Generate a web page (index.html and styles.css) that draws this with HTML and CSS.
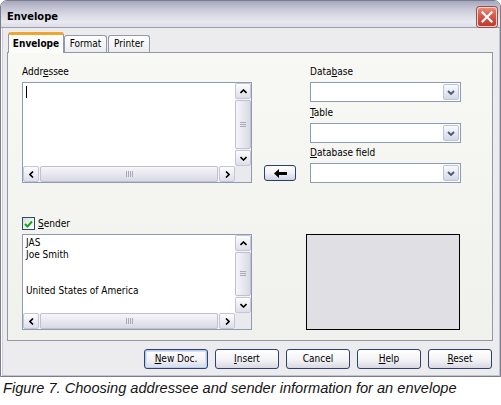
FILE: index.html
```html
<!DOCTYPE html>
<html>
<head>
<meta charset="utf-8">
<title>Envelope</title>
<link rel="stylesheet" href="styles.css">
</head>
<body>
<div class="window">
  <div class="titlebar">
    <span class="title">Envelope</span>
    <span class="close"><svg width="12" height="12" viewBox="0 0 12 12"><path d="M1.5 1.5 L10.5 10.5 M10.5 1.5 L1.5 10.5" stroke="#fff" stroke-width="2.2" stroke-linecap="square"/></svg></span>
  </div>
  <div class="body">
    <div class="tabs">
      <div class="tab active">Envelope</div>
      <div class="tab t-format">Format</div>
      <div class="tab t-printer">Printer</div>
    </div>
    <div class="panel">
      <div class="row-top">
        <div class="col-left">
          <div class="label">Addr<u>e</u>ssee</div>
          <div class="textbox tb-addr">
            <div class="tb-content"><span class="caret"></span></div>
            <div class="vscroll">
              <div class="sb-btn"><svg width="7" height="5" viewBox="0 0 7 5"><path d="M0.5 4 L3.5 1 L6.5 4" fill="none" stroke="#000" stroke-width="1.6"/></svg></div>
              <div class="vthumb"><svg width="6" height="6" viewBox="0 0 6 6"><path d="M0 0.5H6M0 2.5H6M0 4.5H6" stroke="#a9a9bb" stroke-width="1"/></svg></div>
              <div class="sb-btn"><svg width="7" height="5" viewBox="0 0 7 5"><path d="M0.5 1 L3.5 4 L6.5 1" fill="none" stroke="#000" stroke-width="1.6"/></svg></div>
            </div>
            <div class="hscroll">
              <div class="sb-btn"><svg width="5" height="7" viewBox="0 0 5 7"><path d="M4 0.5 L1 3.5 L4 6.5" fill="none" stroke="#000" stroke-width="1.6"/></svg></div>
              <div class="hthumb"><svg width="7" height="6" viewBox="0 0 7 6"><path d="M0.5 0V6M2.5 0V6M4.5 0V6M6.5 0V6" stroke="#a9a9bb" stroke-width="1"/></svg></div>
              <div class="sb-btn"><svg width="5" height="7" viewBox="0 0 5 7"><path d="M1 0.5 L4 3.5 L1 6.5" fill="none" stroke="#000" stroke-width="1.6"/></svg></div>
            </div>
            <div class="corner"></div>
          </div>
        </div>
        <div class="col-mid">
          <div class="arrow-btn"><svg width="13" height="9" viewBox="0 0 13 9"><path d="M0 4.5 L5 0 V3 H13 V6 H5 V9 Z" fill="#000"/></svg></div>
        </div>
        <div class="col-right">
          <div class="label">Data<u>b</u>ase</div>
          <div class="combo"><span class="dd"><svg width="8" height="5" viewBox="0 0 8 5"><path d="M1 1 L4 4 L7 1" fill="none" stroke="#4a5878" stroke-width="1.8"/></svg></span></div>
          <div class="label l2"><u>T</u>able</div>
          <div class="combo"><span class="dd"><svg width="8" height="5" viewBox="0 0 8 5"><path d="M1 1 L4 4 L7 1" fill="none" stroke="#4a5878" stroke-width="1.8"/></svg></span></div>
          <div class="label l3"><u>D</u>atabase field</div>
          <div class="combo"><span class="dd"><svg width="8" height="5" viewBox="0 0 8 5"><path d="M1 1 L4 4 L7 1" fill="none" stroke="#4a5878" stroke-width="1.8"/></svg></span></div>
        </div>
      </div>
      <div class="row-bottom">
        <div class="col-left">
          <div class="check-line">
            <span class="checkbox"><svg width="9" height="8" viewBox="0 0 9 8"><path d="M1 4 L3.5 6.5 L8 1.5" fill="none" stroke="#21a121" stroke-width="2"/></svg></span>
            <span class="check-label"><u>S</u>ender</span>
          </div>
          <div class="textbox tb-sender">
            <div class="tb-content text">JAS<br>Joe Smith<br><br><br>United States of America</div>
            <div class="vscroll">
              <div class="sb-btn"><svg width="7" height="5" viewBox="0 0 7 5"><path d="M0.5 4 L3.5 1 L6.5 4" fill="none" stroke="#000" stroke-width="1.6"/></svg></div>
              <div class="vthumb"><svg width="6" height="6" viewBox="0 0 6 6"><path d="M0 0.5H6M0 2.5H6M0 4.5H6" stroke="#a9a9bb" stroke-width="1"/></svg></div>
              <div class="sb-btn"><svg width="7" height="5" viewBox="0 0 7 5"><path d="M0.5 1 L3.5 4 L6.5 1" fill="none" stroke="#000" stroke-width="1.6"/></svg></div>
            </div>
            <div class="hscroll">
              <div class="sb-btn"><svg width="5" height="7" viewBox="0 0 5 7"><path d="M4 0.5 L1 3.5 L4 6.5" fill="none" stroke="#000" stroke-width="1.6"/></svg></div>
              <div class="hthumb"><svg width="7" height="6" viewBox="0 0 7 6"><path d="M0.5 0V6M2.5 0V6M4.5 0V6M6.5 0V6" stroke="#a9a9bb" stroke-width="1"/></svg></div>
              <div class="sb-btn"><svg width="5" height="7" viewBox="0 0 5 7"><path d="M1 0.5 L4 3.5 L1 6.5" fill="none" stroke="#000" stroke-width="1.6"/></svg></div>
            </div>
            <div class="corner"></div>
          </div>
        </div>
        <div class="preview"></div>
      </div>
    </div>
    <div class="buttons">
      <button type="button" class="btn default"><u>N</u>ew Doc.</button>
      <button type="button" class="btn"><u>I</u>nsert</button>
      <button type="button" class="btn">Cancel</button>
      <button type="button" class="btn"><u>H</u>elp</button>
      <button type="button" class="btn"><u>R</u>eset</button>
    </div>
  </div>
</div>
<p class="caption">Figure 7. Choosing addressee and sender information for an envelope</p>
</body>
</html>
```

FILE: styles.css
```css
html, body {
  margin: 0;
  padding: 0;
  background: #ffffff;
}
body {
  width: 501px;
  height: 405px;
  overflow: hidden;
  font-family: "DejaVu Sans Condensed", "Liberation Sans", sans-serif;
  font-stretch: condensed;
  font-size: 10px;
  color: #000;
}
u {
  text-decoration: underline;
  text-underline-offset: 1px;
}

.window {
  width: 501px;
  height: 377px;
  box-sizing: border-box;
  border: 1px solid #7c7c90;
  border-radius: 7px 7px 0 0;
  overflow: hidden;
  display: flex;
  flex-direction: column;
  background: #ececef;
}

.titlebar {
  height: 27px;
  box-sizing: border-box;
  flex: none;
  display: flex;
  align-items: flex-start;
  justify-content: space-between;
  padding: 0 3px 0 6px;
  border-bottom: 1px solid #9e9eb2;
  background: linear-gradient(to bottom, #a6a6bc 0%, #bdbdcf 20%, #d6d6e2 50%, #e9e9f0 80%, #dcdce6 100%);
}
.title {
  margin-top: 9px;
  font-weight: bold;
  font-size: 11px;
  line-height: 13px;
  color: #000;
}
.close {
  margin-top: 6px;
  width: 20px;
  height: 20px;
  box-sizing: border-box;
  border: 1px solid #f4d7d2;
  border-radius: 3px;
  background: linear-gradient(to bottom, #e98a77 0%, #d4584a 45%, #c13b2e 100%);
  box-shadow: 0 0 0 1px #a44a40;
  display: flex;
  align-items: center;
  justify-content: center;
}

.body {
  flex: 1;
  display: flex;
  flex-direction: column;
  padding: 4px 7px 7px 6px;
  box-shadow: inset 1px 0 #ffffff, inset 2px 0 #cfcfdb, inset -1px 0 #c2c2d0, inset 0 -1px #c2c2d0;
}

.tabs {
  height: 21px;
  display: flex;
  align-items: flex-end;
  padding-left: 1px;
  margin-bottom: -1px;
  position: relative;
  z-index: 1;
}
.tab {
  box-sizing: border-box;
  height: 17px;
  margin-bottom: 1px;
  padding-top: 2px;
  line-height: 12px;
  text-align: center;
  border: 1px solid #9198a8;
  border-bottom: none;
  border-radius: 3px 3px 0 0;
  background: linear-gradient(to bottom, #ffffff, #ececf0);
}
.tab.active {
  width: 56px;
  height: 21px;
  margin-bottom: 0;
  padding-top: 3px;
  font-weight: bold;
  border-top: 3px solid #f0a531;
  border-radius: 3px 3px 0 0;
  background: #fbfbf9;
}
.t-format {
  width: 43px;
}
.t-printer {
  width: 42px;
  margin-left: 1px;
}

.panel {
  height: 289px;
  box-sizing: border-box;
  border: 1px solid #9198a8;
  background: linear-gradient(to bottom, #f8f8f5, #f0f0ec);
  padding: 13px 0 10px 14px;
}

.row-top {
  display: flex;
}
.col-left {
  width: 230px;
  display: flex;
  flex-direction: column;
}
.col-mid {
  width: 46px;
  padding-left: 12px;
  padding-bottom: 2px;
  display: flex;
  flex-direction: column;
  justify-content: flex-end;
}
.col-right {
  width: 151px;
  display: flex;
  flex-direction: column;
}

.label {
  height: 12px;
  line-height: 12px;
  white-space: nowrap;
}
.label.l2 {
  margin-top: 5px;
}
.label.l3 {
  margin-top: 4px;
}

.textbox {
  margin-top: 4px;
  box-sizing: border-box;
  border: 1px solid #8e9bb2;
  background: #ffffff;
  display: grid;
  grid-template-columns: 1fr 16px;
  grid-template-rows: 1fr 16px;
}
.tb-addr {
  height: 101px;
}
.tb-sender {
  height: 96px;
}
.tb-content {
  padding: 2px 3px;
  line-height: 12px;
  white-space: nowrap;
  overflow: hidden;
}
.caret {
  display: block;
  width: 1px;
  height: 12px;
  margin-top: 1px;
  background: #000;
}

.vscroll {
  display: flex;
  flex-direction: column;
  background: #f4f4f7;
}
.hscroll {
  display: flex;
  background: #f4f4f7;
}
.corner {
  background: #e9e9ee;
}
.sb-btn {
  flex: none;
  width: 16px;
  height: 16px;
  box-sizing: border-box;
  border: 1px solid #c3c6d6;
  border-radius: 2px;
  background: linear-gradient(to bottom, #fdfdfe, #dedee8);
  display: flex;
  align-items: center;
  justify-content: center;
}
.vthumb {
  flex: 1;
  margin: 1px 0;
  box-sizing: border-box;
  border: 1px solid #c0c0d0;
  border-radius: 2px;
  background: linear-gradient(to right, #f6f6f9, #d9d9e4);
  display: flex;
  align-items: center;
  justify-content: center;
}
.hthumb {
  flex: 1;
  margin: 0 1px;
  box-sizing: border-box;
  border: 1px solid #c0c0d0;
  border-radius: 2px;
  background: linear-gradient(to bottom, #f6f6f9, #d9d9e4);
  display: flex;
  align-items: center;
  justify-content: center;
}

.arrow-btn {
  width: 32px;
  height: 16px;
  box-sizing: border-box;
  border: 1px solid #2c3f6a;
  border-radius: 3px;
  background: linear-gradient(to bottom, #ffffff 0%, #f1f1f6 50%, #cfd1e2 100%);
  display: flex;
  align-items: center;
  justify-content: center;
}

.combo {
  margin-top: 4px;
  height: 20px;
  box-sizing: border-box;
  border: 1px solid #8e9bb2;
  background: #ffffff;
  display: flex;
  justify-content: flex-end;
  align-items: center;
  padding-right: 1px;
}
.dd {
  width: 16px;
  height: 16px;
  box-sizing: border-box;
  border: 1px solid #bcc4d8;
  border-radius: 2px;
  background: linear-gradient(to bottom, #fbfbfd, #d4d8e6);
  display: flex;
  align-items: center;
  justify-content: center;
}

.row-bottom {
  margin-top: 34px;
  display: flex;
}
.check-line {
  height: 13px;
  display: flex;
  align-items: center;
  line-height: 13px;
}
.checkbox {
  width: 13px;
  height: 13px;
  box-sizing: border-box;
  border: 1px solid #2a4a74;
  background: linear-gradient(135deg, #dcdcd6, #ffffff);
  display: flex;
  align-items: center;
  justify-content: center;
  margin-right: 3px;
}
.preview {
  align-self: flex-end;
  margin-left: 54px;
  width: 154px;
  height: 96px;
  box-sizing: border-box;
  border: 1px solid #000;
  background: #dfdfe4;
}

.buttons {
  margin-top: 8px;
  height: 20px;
  display: flex;
  justify-content: flex-end;
  gap: 7px;
  padding-right: 1px;
}
.btn {
  width: 64px;
  height: 20px;
  box-sizing: border-box;
  margin: 0;
  padding: 0;
  font: inherit;
  line-height: 12px;
  color: #000;
  text-align: center;
  border: 1px solid #2f416c;
  border-radius: 3px;
  background: linear-gradient(to bottom, #ffffff 0%, #f3f3f6 55%, #d8d8e2 100%);
}
.btn.default {
  box-shadow: inset 0 0 0 1px #b8cdf0, inset 0 0 0 2px #d6e2f6;
}

.caption {
  margin: 3px 0 0 3px;
  font-family: "Liberation Sans", Arial, sans-serif;
  font-stretch: normal;
  font-style: italic;
  font-size: 14.6px;
  line-height: 17px;
  color: #141414;
}
```
